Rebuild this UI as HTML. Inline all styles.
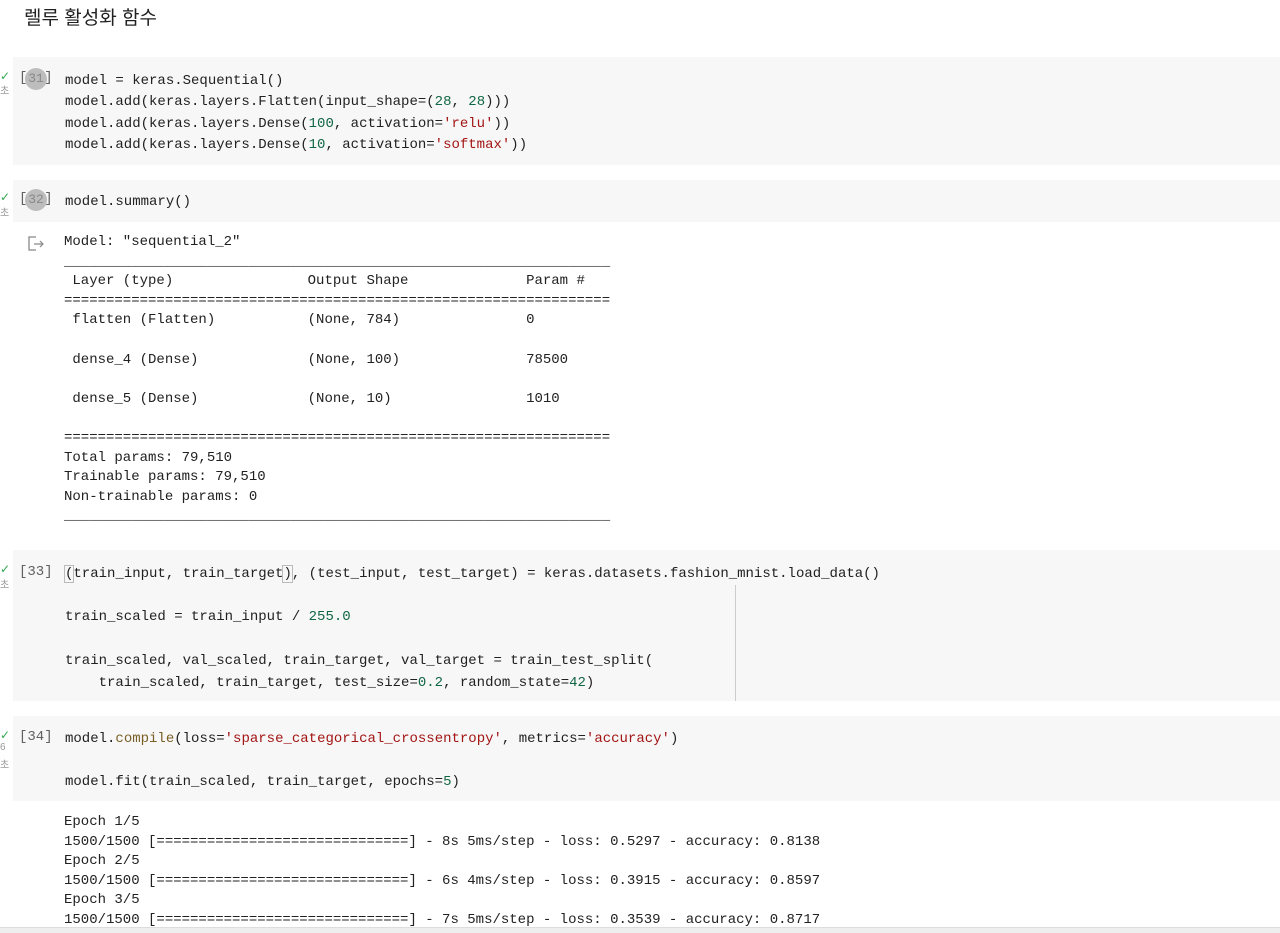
<!DOCTYPE html>
<html><head><meta charset="utf-8"><style>
body{margin:0;width:1280px;height:932px;background:#fff;position:relative;overflow:hidden;font-family:"Liberation Mono",monospace;font-size:14px;color:#212121}
.a{position:absolute;white-space:pre;line-height:20px}
.cell{position:absolute;left:13px;right:0;background:#f7f7f7}
.n{color:#116644}.s{color:#a31515}.f{color:#795e26}
.cnt{position:absolute;left:19px;color:#616161;font-size:14px;white-space:pre}
.chk{position:absolute;left:0;color:#34a853;font-size:12px;font-family:"DejaVu Sans",sans-serif}
.t{position:absolute;left:0;color:#999;font-size:10px;font-family:"Liberation Sans","Noto Sans CJK KR",sans-serif}
.badge{position:absolute;left:25px;width:22px;height:22px;border-radius:50%;background:#bdbdbd;color:#888;font-size:13px;text-align:center;line-height:22px}
</style></head><body>
<div class="a" style="left:24px;top:6px;font-family:'Liberation Sans','Noto Sans CJK KR',sans-serif;font-size:19px;line-height:26px;color:#212121">렐루 활성화 함수</div>

<div class="cell" style="top:57px;height:108px"></div>
<div class="chk" style="top:69px">✓</div><div class="t" style="top:82px">초</div>
<div class="cnt" style="top:70px">[  ]</div><div class="badge" style="top:68px">31</div>
<div class="a" style="left:65px;top:71px;line-height:21.3px">model = keras.Sequential()
model.add(keras.layers.Flatten(input_shape=(<span class="n">28</span>, <span class="n">28</span>)))
model.add(keras.layers.Dense(<span class="n">100</span>, activation=<span class="s">'relu'</span>))
model.add(keras.layers.Dense(<span class="n">10</span>, activation=<span class="s">'softmax'</span>))</div>

<div class="cell" style="top:180px;height:42px"></div>
<div class="chk" style="top:190px">✓</div><div class="t" style="top:204px">초</div>
<div class="cnt" style="top:191px">[  ]</div><div class="badge" style="top:189px">32</div>
<div class="a" style="left:65px;top:192px">model.summary()</div>

<svg style="position:absolute;left:28px;top:236px" width="20" height="16"><path d="M8 1H1V14H8" fill="none" stroke="#888" stroke-width="1.3"/><path d="M6 8H15M12 5L15 8L12 11" fill="none" stroke="#888" stroke-width="1.2"/></svg>
<div class="a" style="left:64px;top:233px;line-height:19.6px">Model: "sequential_2"
_________________________________________________________________
 Layer (type)                Output Shape              Param #   
=================================================================
 flatten (Flatten)           (None, 784)               0         
                                                                 
 dense_4 (Dense)             (None, 100)               78500     
                                                                 
 dense_5 (Dense)             (None, 10)                1010      
                                                                 
=================================================================
Total params: 79,510
Trainable params: 79,510
Non-trainable params: 0
_________________________________________________________________</div>

<div class="cell" style="top:550px;height:151px"></div>
<div style="position:absolute;left:735px;top:585px;width:1px;height:116px;background:#ccc"></div>
<div class="chk" style="top:562px">✓</div><div class="t" style="top:576px">초</div>
<div class="cnt" style="top:564px">[33]</div>
<div class="a" style="left:65px;top:564px;line-height:21.7px"><span style="outline:1px solid #bbb">(</span>train_input, train_target<span style="outline:1px solid #bbb">)</span>, (test_input, test_target) = keras.datasets.fashion_mnist.load_data()

train_scaled = train_input / <span class="n">255.0</span>

train_scaled, val_scaled, train_target, val_target = train_test_split(
    train_scaled, train_target, test_size=<span class="n">0.2</span>, random_state=<span class="n">42</span>)</div>

<div class="cell" style="top:716px;height:85px"></div>
<div class="chk" style="top:728px">✓</div><div class="t" style="top:742px">6</div><div class="t" style="top:756px">초</div>
<div class="cnt" style="top:729px">[34]</div>
<div class="a" style="left:65px;top:729px;line-height:21.5px">model.<span class="f">compile</span>(loss=<span class="s">'sparse_categorical_crossentropy'</span>, metrics=<span class="s">'accuracy'</span>)

model.fit(train_scaled, train_target, epochs=<span class="n">5</span>)</div>

<div class="a" style="left:64px;top:813px;line-height:19.6px">Epoch 1/5
1500/1500 [==============================] - 8s 5ms/step - loss: 0.5297 - accuracy: 0.8138
Epoch 2/5
1500/1500 [==============================] - 6s 4ms/step - loss: 0.3915 - accuracy: 0.8597
Epoch 3/5
1500/1500 [==============================] - 7s 5ms/step - loss: 0.3539 - accuracy: 0.8717</div>
<div style="position:absolute;left:0;right:0;top:927px;height:5px;background:#eee;border-top:1px solid #ddd"></div>
</body></html>
